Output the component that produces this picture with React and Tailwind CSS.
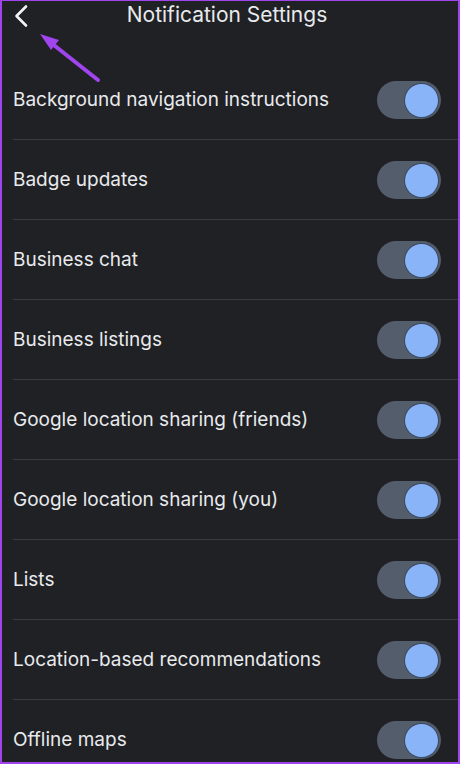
const items = [
  'Background navigation instructions',
  'Badge updates',
  'Business chat',
  'Business listings',
  'Google location sharing (friends)',
  'Google location sharing (you)',
  'Lists',
  'Location-based recommendations',
  'Offline maps',
]

function Toggle() {
  return (
    <div className="relative h-[38px] w-[64px] shrink-0 rounded-full bg-[#535d6c]">
      <div className="absolute right-[3px] top-[3px] h-[33px] w-[33px] rounded-full bg-[#8ab4f8] ring-1 ring-[#3b4a63]" />
    </div>
  )
}

export default function App() {
  return (
    <div
      className="relative h-[764px] w-[460px] overflow-hidden border-b-2 border-l-2 border-r-2 border-t border-[#a044ee] bg-[#202124] text-[#e8eaed]"
      style={{ fontFamily: 'Inter, "Noto Sans", sans-serif' }}
    >
      <header className="relative flex h-[59px] items-start justify-center">
        <svg
          className="absolute left-[10px] top-[3px]"
          width="20"
          height="24"
          viewBox="0 0 20 24"
          fill="none"
        >
          <path
            d="M14 2.5 L4.5 12 L14 21.5"
            stroke="#f1f3f4"
            strokeWidth="2.6"
            strokeLinecap="round"
            strokeLinejoin="round"
          />
        </svg>
        <h1 className="mr-[6px] text-[21px] leading-[27px] font-normal">
          Notification Settings
        </h1>
        <svg
          className="absolute left-[36px] top-[31px]"
          width="68"
          height="56"
          viewBox="0 0 68 56"
          fill="none"
        >
          <line x1="60" y1="48" x2="12" y2="10" stroke="#a044ee" strokeWidth="4" strokeLinecap="round" />
          <polygon points="2,2 13,18 21,8" fill="#a044ee" />
        </svg>
      </header>

      <ul>
        {items.map((label) => (
          <li
            key={label}
            className="ml-[11px] flex h-[80px] items-center justify-between border-b border-[#3a3b3f] pr-[17px]"
          >
            <span className="pt-[2px] text-[19px]">{label}</span>
            <Toggle />
          </li>
        ))}
      </ul>
    </div>
  )
}
